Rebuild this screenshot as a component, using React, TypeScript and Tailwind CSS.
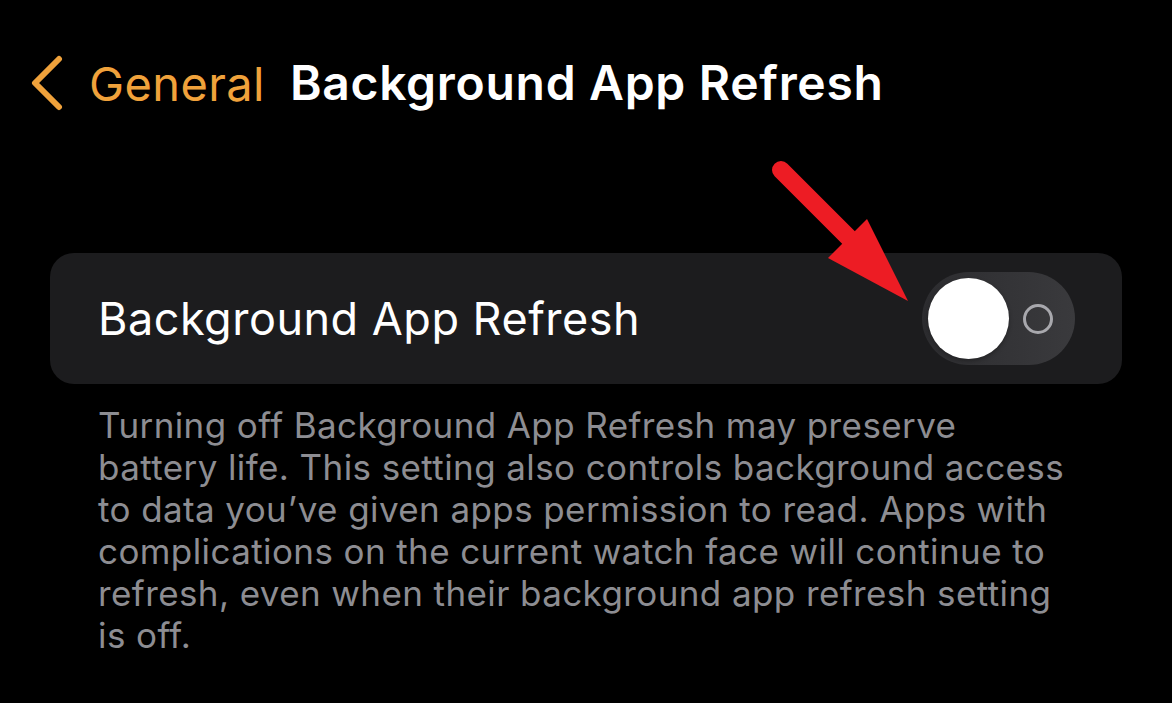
import React from "react";

const lines = [
  "Turning off Background App Refresh may preserve",
  "battery life. This setting also controls background access",
  "to data you’ve given apps permission to read. Apps with",
  "complications on the current watch face will continue to",
  "refresh, even when their background app refresh setting",
  "is off.",
];

export default function App() {
  return (
    <div
      className="relative w-[1172px] h-[703px] bg-black overflow-hidden"
      style={{ fontFamily: "Inter, 'Noto Sans', sans-serif" }}
    >
      <div className="flex items-center h-[60px] mt-[53px] pl-[30px]">
        <svg width="34" height="56" viewBox="0 0 34 56" className="mr-[25px]">
          <path d="M29 4 L5 28 L29 52" fill="none" stroke="#f0a23b" strokeWidth="6" strokeLinecap="round" strokeLinejoin="round" />
        </svg>
        <span className="text-[#f0a23b] text-[47px] tracking-[0.4px] leading-none">General</span>
        <span className="text-white text-[48px] font-semibold tracking-[0.7px] leading-none ml-[25px]">Background App Refresh</span>
      </div>

      <div className="ml-[50px] mt-[140px] w-[1072px] h-[131px] rounded-[24px] bg-[#1c1c1e] flex items-center justify-between pl-[48px] pr-[47px]">
        <span className="text-white text-[45px] tracking-[0.5px] leading-none">Background App Refresh</span>
        <div className="w-[153px] h-[93px] rounded-full bg-gradient-to-r from-[#2c2c2f] to-[#3a3a3d] flex items-center pl-[6px] pr-[22px] justify-between">
          <div className="w-[81px] h-[81px] rounded-full bg-white shadow-[0_2px_4px_rgba(0,0,0,0.3)]" />
          <div className="w-[30px] h-[30px] rounded-full border-[3px] border-[#a8a8ad]" />
        </div>
      </div>

      <div className="ml-[98px] mt-[20px] text-[#8d8d92] text-[35px] leading-[42px] tracking-[0.4px]">
        {lines.map((l) => (
          <div key={l} className="whitespace-nowrap">{l}</div>
        ))}
      </div>

      <svg className="absolute left-0 top-0" width="1172" height="703" viewBox="0 0 1172 703">
        <line x1="781" y1="170" x2="852" y2="241" stroke="#ed1c24" strokeWidth="18" strokeLinecap="round" />
        <polygon points="828,258 867,219 908,301" fill="#ed1c24" />
      </svg>
    </div>
  );
}
